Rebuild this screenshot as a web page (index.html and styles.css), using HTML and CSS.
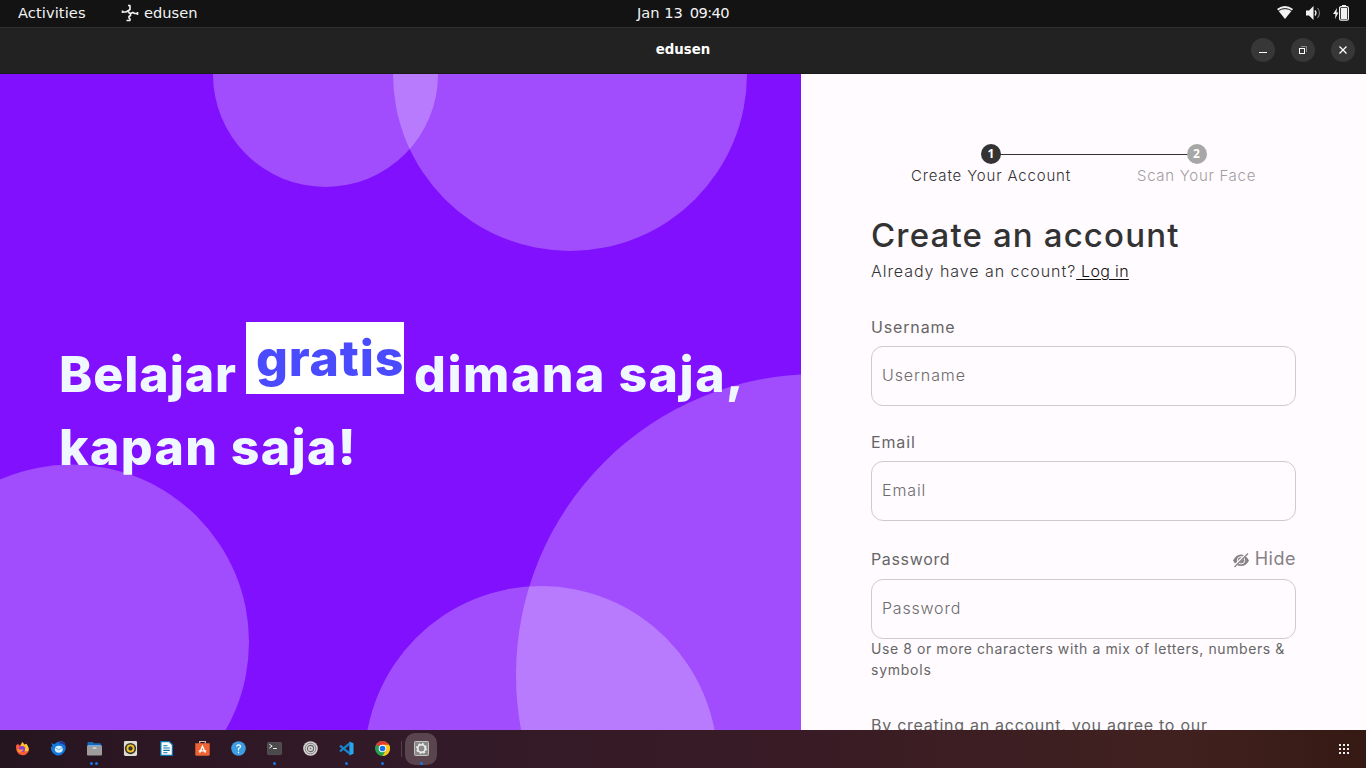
FILE: index.html
```html
<!DOCTYPE html>
<html lang="id">
<head>
<meta charset="utf-8">
<title>edusen</title>
<link rel="stylesheet" href="styles.css">
</head>
<body>
<div class="desktop">
  <header class="topbar">
    <div class="topbar-left">
      <span class="activities">Activities</span>
      <svg class="app-glyph" width="18" height="18" viewBox="0 0 18 18" fill="none" stroke="#f2f2f2" stroke-width="1.600"><path d="M7 1.500H9.500M9 1.500V5.500L7.500 6.500V8.500M1.500 6.500V9M1.500 8H5L7.500 6.500M7.500 8.500L9.500 9.500L12 8.500L13.500 9.500H16M16.500 8V11M9.500 9.500V11.500L8 12.500V14L9 15V16.500M9.500 16.500H5.500"/></svg>
      <span class="app-name">edusen</span>
    </div>
    <span class="clock"><span>Jan 13</span><span class="time">09:40</span></span>
    <div class="tray">
      <svg width="16" height="14" viewBox="0 0 16 14"><path d="M0 3Q8-3 16 3L8 13Z" fill="#f2f2f2"/><path d="M1.300 4.700Q8 .5 14.700 4.700" fill="none" stroke="#131313" stroke-width="1"/></svg>
      <svg width="16" height="14" viewBox="0 0 16 14"><path d="M1 4.500H4L8.500 0V14L4 9.500H1Z" fill="#f2f2f2"/><path d="M10 4.500Q12 7 10 9.500" fill="none" stroke="#f2f2f2" stroke-width="1.300"/><path d="M12.500 2Q16.500 7 12.500 12" fill="none" stroke="#777" stroke-width="1.200"/></svg>
      <svg width="17" height="16" viewBox="0 0 17 16"><path d="M4 3L0 9H2.500L2 14L5.500 7.500H3.500Z" fill="#f2f2f2"/><path d="M9 .7H13" stroke="#f2f2f2" stroke-width="1.400"/><rect x="6.600" y="1.600" width="8.800" height="13.600" rx="1.500" fill="none" stroke="#f2f2f2" stroke-width="1.200"/><rect x="8" y="3" width="6" height="11" fill="#f2f2f2"/></svg>
    </div>
  </header>
  <div class="titlebar">
    <span class="window-title">edusen</span>
    <div class="window-buttons">
      <span class="wbtn"><svg width="24" height="24"><path d="M8 14.500H16" stroke="#fff"/></svg></span>
      <span class="wbtn"><svg width="24" height="24" fill="none"><path d="M10 8.500H15.500V14" stroke="#888"/><rect x="8.500" y="10.500" width="5" height="5" stroke="#fff"/></svg></span>
      <span class="wbtn"><svg width="24" height="24"><path d="M8.500 8.500L15.500 15.500M15.500 8.500L8.500 15.500" stroke="#fff" stroke-width="1.300"/></svg></span>
    </div>
  </div>

  <main class="window">
    <section class="hero">
      <svg class="bubbles" viewBox="0 0 801 656" width="801" height="656" fill="#fff" fill-opacity=".26">
        <circle cx="325.500" cy="0.500" r="112.500"/>
        <circle cx="570" cy="0" r="177"/>
        <circle cx="817" cy="601" r="301"/>
        <circle cx="541" cy="688.500" r="176.500"/>
        <circle cx="71.500" cy="568" r="177.500"/>
      </svg>
      <h1 class="slogan">
        <span class="line line-1"><span class="w-belajar">Belajar</span><span class="chip">gratis</span><span class="w-dimana">dimana saja,</span></span>
        <span class="line line-2">kapan saja!</span>
      </h1>
    </section>

    <section class="panel">
      <ol class="steps">
        <li class="step active"><span class="dot">1</span><span class="step-label label-one">Create Your Account</span></li>
        <li class="step"><span class="dot">2</span><span class="step-label label-two">Scan Your Face</span></li>
      </ol>
      <h2 class="heading">Create an account</h2>
      <p class="login">Already have an ccount?<a href="#"> Log in</a></p>
      <form class="form">
        <div class="field">
          <label class="label">Username</label>
          <input class="input" type="text" placeholder="Username">
        </div>
        <div class="field">
          <label class="label">Email</label>
          <input class="input" type="text" placeholder="Email">
        </div>
        <div class="field field-password">
          <div class="label-row">
            <label class="label t-password">Password</label>
            <span class="hide"><svg width="16" height="16" viewBox="0 0 16 16"><path d="M0 8.500Q3 2.500 8 2.500T16 8.500Q13 14 8 14T0 8.500Z" fill="#848284"/><circle cx="8" cy="8.300" r="3.700" fill="none" stroke="#fffbff" stroke-width="1"/><path d="M1.600 14L13.800 1.800" stroke="#fffbff" stroke-width="2.600"/><path d="M1.500 15L15 1.500" stroke="#848284" stroke-width="1.300"/></svg><span>Hide</span></span>
          </div>
          <input class="input t-password" type="text" placeholder="Password">
        </div>
        <p class="hint"><span class="hint-1">Use 8 or more characters with a mix of letters, numbers &amp;</span><br><span class="hint-2">symbols</span></p>
        <p class="terms">By creating an account, you agree to our</p>
      </form>
    </section>
  </main>

  <nav class="dock">
    <div class="dock-apps">
      <span class="app"><svg viewBox="0 0 16 16"><path d="M1 5L3 3L5 5L8 1L10 4L12 3Q16 8 14 12Q11 16 7 15Q1 14 1 5Z" fill="#ff5a36"/><path d="M8 1L10 4L12 3Q16 8 14 11L10 11L11 7L6 5Z" fill="#ffc52e"/><circle cx="7.500" cy="8.500" r="3.300" fill="#8a40d8"/><path d="M2 9Q6 9 9 9Q8 12 4 12Z" fill="#ff9630"/></svg></span>
      <span class="app"><svg viewBox="0 0 16 16"><path d="M.5 2L3.500 3.500Q8-1 14 1Q17.500 8 14 12Q10 17 5 15Q-.5 12 0 6L1.500 6.500Z" fill="#1479dd"/><path d="M7.500 2Q11 0 14 1L15.500 5Q12 2 7.500 2Z" fill="#2b2f94"/><ellipse cx="8.300" cy="8.700" rx="4.200" ry="3.700" fill="#d9effc"/><path d="M4.500 7L8.300 9.500L12 7" fill="none" stroke="#5aa8e6"/></svg></span>
      <span class="app"><svg viewBox="0 0 16 16"><path d="M.5 2Q.5 1 1.500 1H6L7.500 2.500H14Q15 2.500 15 4V7H.5Z" fill="#1968b5"/><rect x="0" y="5" width="16" height="10.500" rx="1" fill="#9e9c9c"/><path d="M.5 5H15.500" stroke="#77bdf2"/><path d="M6 7.500H10" stroke="#fff"/></svg><i></i><i></i></span>
      <span class="app"><svg viewBox="0 0 16 16"><rect x="1" y="0" width="14" height="16" rx="1.500" fill="#dfdcd2"/><circle cx="8" cy="8" r="6" fill="#37342f"/><circle cx="8" cy="8" r="3.300" fill="none" stroke="#f2c32a" stroke-width="2"/></svg></span>
      <span class="app"><svg viewBox="0 0 16 16"><path d="M2 .7H11L14.300 4V15.300H2Z" fill="#fff" stroke="#0875ae" stroke-width="1.300"/><path d="M4.500 5H9M4.500 7.500H11.500M4.500 10H11.500M4.500 12.500H9" stroke="#0875ae" stroke-width="1.100"/></svg></span>
      <span class="app"><svg viewBox="0 0 16 16"><path d="M5 3V.5H11V3" fill="none" stroke="#ddb6a5" stroke-width="1.300"/><path d="M.3 2.500H15.700V14Q15.700 15.700 14 15.700H2Q.3 15.700 .3 14Z" fill="#ed6334"/><path d="M5 12.500L8 5.500L11 12.500M4 10.500H12" stroke="#fff" stroke-width="1.400" fill="none"/></svg></span>
      <span class="app"><svg viewBox="0 0 16 16"><circle cx="8" cy="8" r="7.800" fill="#3c9ee1"/><path d="M5.700 5.700Q8 2.800 10 5Q10.800 6.800 8 8V10M8 11.500V13" stroke="#fff" stroke-width="1.300" fill="none"/></svg></span>
      <span class="app"><svg viewBox="0 0 16 16"><rect x=".5" y="1.500" width="15" height="13" rx="1" fill="#4a4a4a" stroke="#686868" stroke-width=".6"/><path d="M2.500 3.500L5.500 5.500L2.500 7.500M6.500 8H10.500" stroke="#fff" fill="none"/></svg><i></i></span>
      <span class="app"><svg viewBox="0 0 16 16"><circle cx="8" cy="8" r="7.800" fill="#d6d4d4"/><circle cx="8" cy="8" r="5.700" fill="none" stroke="#777"/><circle cx="8" cy="8" r="3.300" fill="none" stroke="#666" stroke-width="1.200"/><circle cx="8" cy="8" r="1" fill="#777"/></svg></span>
      <span class="app"><svg viewBox="0 0 16 16"><path d="M11 .5L15.500 2.500V13.500L11 15.500Z" fill="#29a5ed"/><path d="M11.500 2.500L1 11M1 5L11.500 13.500" stroke="#1587cf" stroke-width="2.300"/></svg><i></i></span>
      <span class="app"><svg viewBox="0 0 16 16"><circle cx="8" cy="8" r="8" fill="#24a352"/><path d="M8 8L1.070 4A8 8 0 0 1 14.930 4Z" fill="#e33d31"/><path d="M8 4H14.930A8 8 0 0 1 8 16L11.500 10Z" fill="#fbc916"/><circle cx="8" cy="8" r="4" fill="#fff"/><circle cx="8" cy="8" r="3" fill="#1972e8"/></svg><i></i></span>
      <span class="separator"></span>
      <span class="app current"><svg viewBox="0 0 16 16"><rect x=".5" y=".5" width="15" height="15" rx="1" fill="#888887" stroke="#ccc"/><circle cx="8" cy="8" r="4" fill="none" stroke="#eee" stroke-width="1.800"/><circle cx="8" cy="8" r="5.200" fill="none" stroke="#eee" stroke-width="1.300" stroke-dasharray="2 2.080"/></svg><i></i></span>
    </div>
    <svg class="grid-icon" width="10" height="10" viewBox="0 0 10 10" fill="#eee"><path d="M0 0H2V2H0ZM4 0H6V2H4ZM8 0H10V2H8ZM0 4H2V6H0ZM4 4H6V6H4ZM8 4H10V6H8ZM0 8H2V10H0ZM4 8H6V10H4ZM8 8H10V10H8Z"/></svg>
  </nav>
</div>
</body>
</html>
```
FILE: styles.css
```css
* { box-sizing: border-box; }
body, h1, h2, p, ol { margin: 0; padding: 0; }
body { overflow: hidden; font-family: Inter, sans-serif; }

.desktop { display: flex; flex-direction: column; width: 1366px; height: 768px; }

.topbar {
  display: grid; grid-template-columns: 1fr auto 1fr; align-items: center;
  height: 28px; padding: 0 16px 2px 18px;
  background: #131313; border-bottom: 1px solid #303030;
  color: #f2f2f2; font: 14.67px/24px "DejaVu Sans", sans-serif;
}
.topbar-left { display: flex; align-items: center; }
.activities { width: 103px; letter-spacing: .08px; }
.app-glyph { margin-right: 5px; }
.clock { display: flex; gap: 7px; padding-right: 2px; }
.time { letter-spacing: -.6px; }
.tray { display: flex; justify-content: flex-end; align-items: center; gap: 12px; }

.titlebar {
  display: grid; grid-template-columns: 1fr auto 1fr; align-items: center;
  height: 46px; padding: 0 11px 2px; background: #222; border-bottom: 1px solid #191919;
}
.window-title { grid-column: 2; color: #fff; font: bold 13.33px "DejaVu Sans", sans-serif; }
.window-buttons { display: flex; justify-content: flex-end; gap: 16px; }
.wbtn { width: 24px; height: 24px; border-radius: 50%; background: #373737; }
.wbtn svg { display: block; }

.window { display: flex; height: 656px; overflow: hidden; }
.hero { position: relative; width: 801px; background: #8010fd; overflow: hidden; }
.bubbles { position: absolute; inset: 0; }
.slogan { position: relative; padding: 248px 0 0 59px; color: #f0f8ff; font-size: 50px; line-height: 72px; font-weight: 800; white-space: nowrap; }
.line { display: flex; }
.line-1 { height: 89px; }
.line-2 { height: 72px; letter-spacing: 1.35px; }
.w-belajar { width: 187px; padding-top: 16px; letter-spacing: .95px; }
.chip { width: 158px; height: 72px; padding-left: 10px; background: #fff; color: #4a4aff; letter-spacing: .8px; }
.w-dimana { margin-left: 10px; padding-top: 16px; letter-spacing: 1.5px; }

.panel { width: 565px; padding: 70px 70px 0; background: #fffbff; color: #333; overflow: hidden; }
.steps { display: grid; grid-template-columns: 205px 206px; margin-left: 17.500px; height: 72px; list-style: none; }
.step { display: flex; flex-direction: column; align-items: center; position: relative; color: #a09ea0; }
.active { color: #333; }
.active::after { content: ""; position: absolute; left: 102px; top: 10px; width: 205px; height: 1px; background: #333; }
.dot { position: relative; z-index: 1; width: 20px; height: 20px; border-radius: 50%; background: #a7a7a7; color: #fff; font: 700 12px/20px "Noto Sans", sans-serif; text-align: center; }
.active .dot { background: #333; }
.step-label { font-size: 15px; font-weight: 300; line-height: 24px; white-space: nowrap; letter-spacing: .7px; }
.label-one { letter-spacing: .82px; }
.heading { font-size: 33px; line-height: 38px; font-weight: 500; white-space: nowrap; letter-spacing: 1.15px; }
.login { font-size: 16px; line-height: 24px; margin-top: 5px; white-space: pre; font-weight: 300; letter-spacing: .95px; }
.login a { color: #111; text-underline-offset: 2px; text-decoration-thickness: 1px; letter-spacing: .35px; }
.form { display: flex; flex-direction: column; padding-top: 32px; }
.field { display: flex; flex-direction: column; height: 115px; }
.label { font-size: 16px; line-height: 24px; height: 31px; color: #666; letter-spacing: .85px; }
.input { flex-shrink: 0; width: 425px; height: 60px; padding: 0 10px 2px; border: 1px solid #d0cad0; border-radius: 12px; background: transparent; font-family: Inter, sans-serif; font-size: 16px; font-weight: 300; letter-spacing: .9px; }
.input::placeholder { color: #6c6c6c; opacity: 1; }
.t-password { letter-spacing: .65px; }
.input.t-password { letter-spacing: .8px; }
.field-password { height: 93px; }
.label-row { display: flex; flex-shrink: 0; justify-content: space-between; height: 34px; padding-top: 2px; }
.hide { display: flex; align-items: center; gap: 6px; height: 23px; font-size: 18px; color: #848284; letter-spacing: .5px; }
.hide svg { margin-top: 2px; }
.hint { font-size: 14px; line-height: 21px; color: #666; white-space: nowrap; letter-spacing: .58px; }
.hint-2 { letter-spacing: .75px; }
.terms { margin-top: 33px; font-size: 16px; line-height: 24px; color: #666; white-space: nowrap; letter-spacing: .73px; }

.dock { display: flex; justify-content: space-between; align-items: center; height: 38px; padding-right: 17px; padding-left: 4px; background: linear-gradient(90deg, #25151f 0, #2e1724 180px, #331a28 420px, #381b25 800px, #41211f 1180px, #351913 1366px); }
.dock-apps { display: flex; align-items: center; }
.app { position: relative; display: flex; align-items: center; justify-content: center; width: 36px; height: 32px; }
.app > svg { width: 15px; height: 15px; margin: 0 0 1px 1px; }
.app i { position: absolute; bottom: 0; left: 16.500px; width: 3px; height: 3px; border-radius: 50%; background: #1776e8; }
.app i:nth-of-type(2) { left: 19px; }
.app:has(i + i) i:first-of-type { left: 14px; }
.separator { width: 1px; height: 16px; margin: 0 3px 0 1px; background: #584048; }
.current { width: 32px; border-radius: 10px; background: #5a454f; }
.app.current > svg { margin-left: 0; margin-right: 0; }
.current i { left: 14.500px; }
```
